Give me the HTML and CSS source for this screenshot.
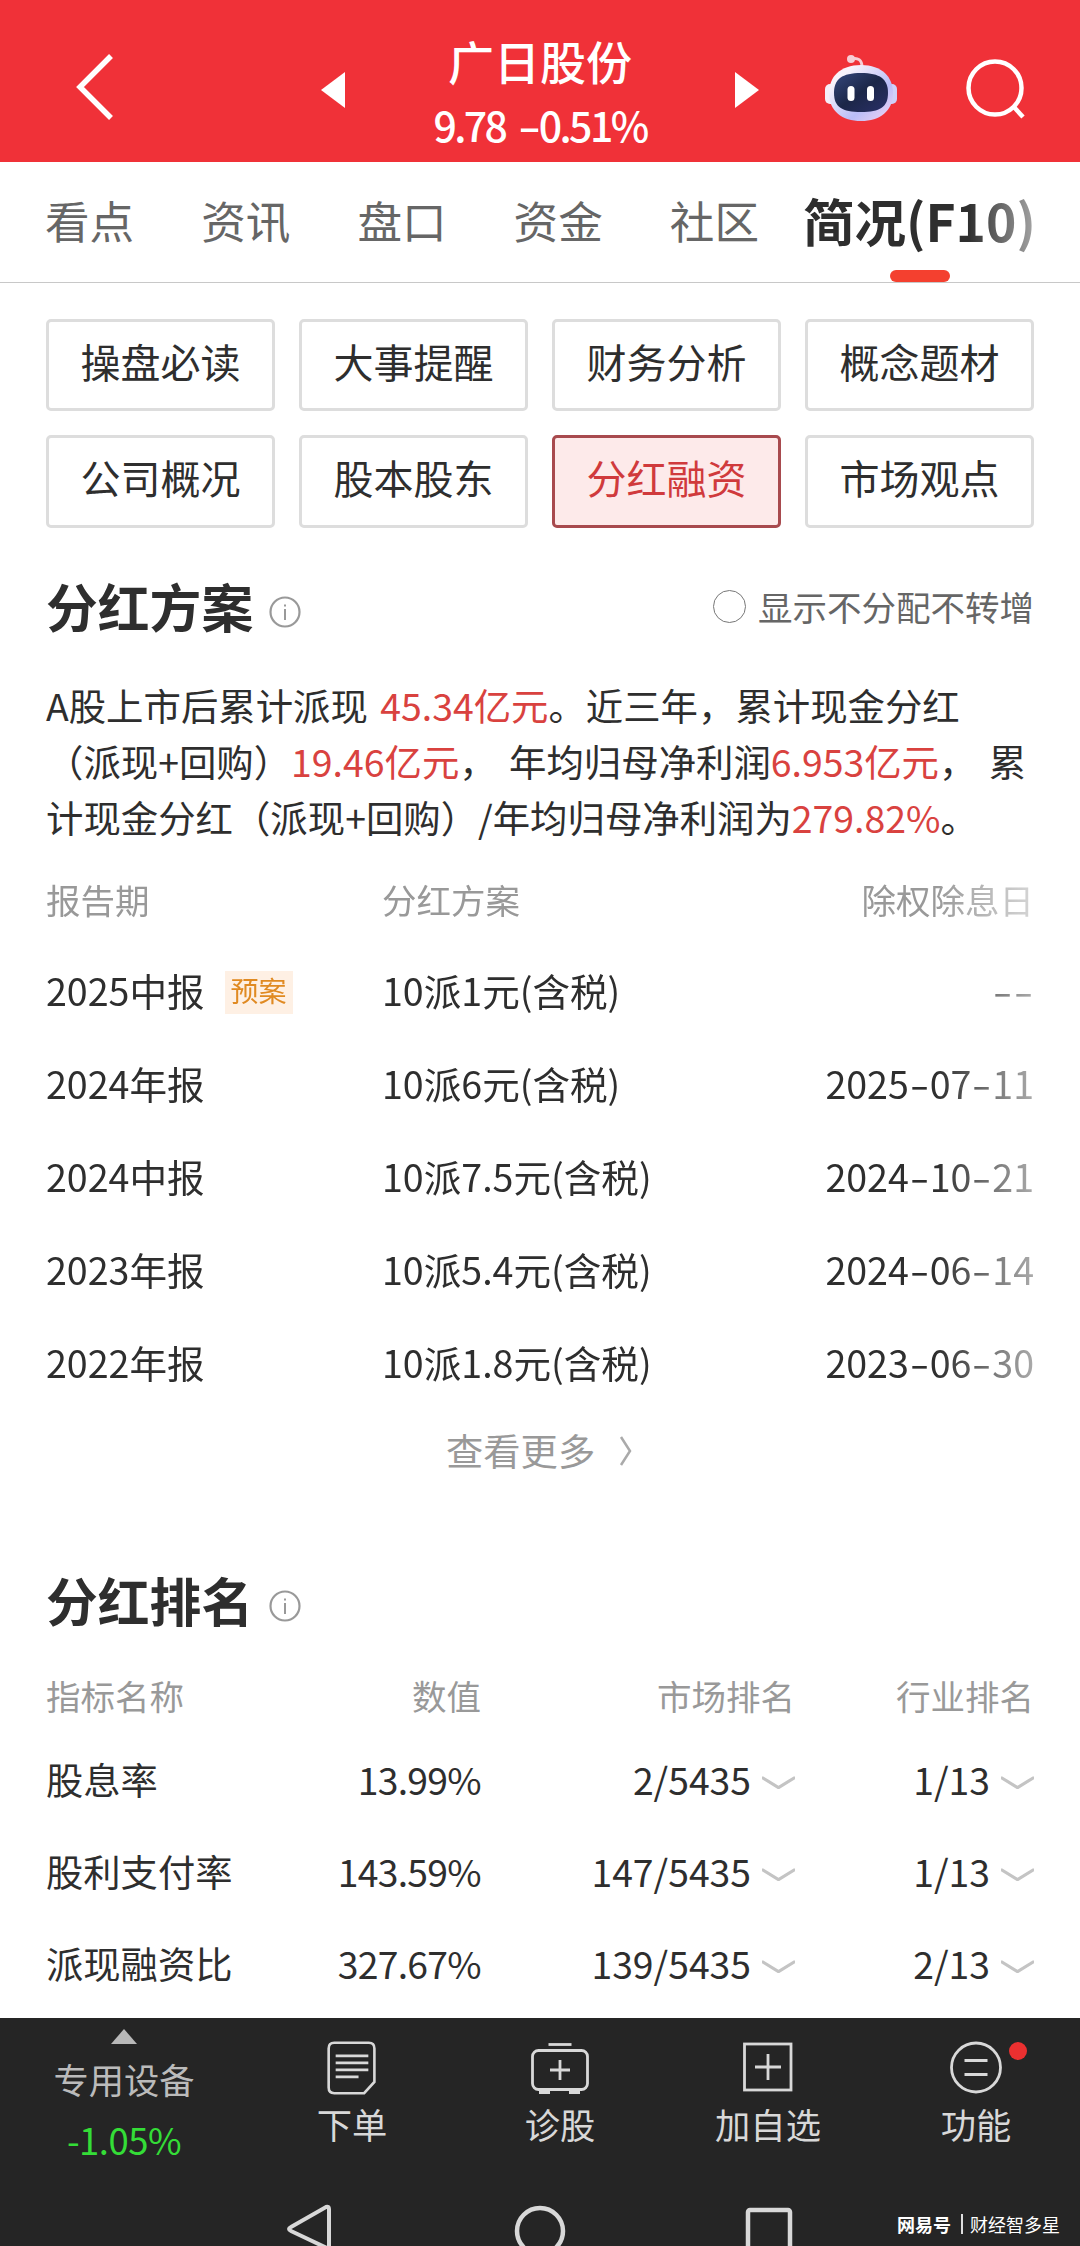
FILE: index.html
```html
<!DOCTYPE html>
<html lang="zh-CN">
	<head>
		<meta charset="utf-8">
		<title>广日股份</title>
		<link rel="stylesheet" href="styles.css">
	</head>
	<body>
		<div class="header">
			<svg class="back" width="40" height="70" viewBox="0 0 40 70"><path d="M37 4L6 35L37 66" fill="none" stroke="#fff" stroke-width="5.5"/></svg>
			<svg class="prev" width="24" height="36" viewBox="0 0 24 36"><path d="M24 0V36L0 18Z" fill="#fff"/></svg>
			<div class="stock">
				<div class="name">广日股份</div>
				<div class="price">9.78 <span class="dash">-</span>0.51%</div>
			</div>
			<svg class="next" width="24" height="36" viewBox="0 0 24 36"><path d="M0 0V36L24 18Z" fill="#fff"/></svg>
			<svg class="robot" width="74" height="70" viewBox="0 0 74 70">
				<defs>
					<linearGradient id="shell" x1="0" y1="0" x2="1" y2="1">
						<stop offset="0.2" stop-color="#f8f3fb"/>
						<stop offset="0.65" stop-color="#b9bdf8"/>
						<stop offset="1" stop-color="#f6d5f3"/>
					</linearGradient>
					<linearGradient id="face" x1="0" y1="0" x2="1" y2="1">
						<stop offset="0" stop-color="#35477c"/>
						<stop offset="0.5" stop-color="#1c2748"/>
						<stop offset="1" stop-color="#2a2f68"/>
					</linearGradient>
				</defs>
				<path d="M27 6C34 4 38 7 38 14" fill="none" stroke="#f7cdd5" stroke-width="3"/>
				<circle cx="27" cy="6" r="4" fill="#f7cdd5"/>
				<rect x="1" y="31" width="12" height="20" rx="5" fill="#f5eef8"/>
				<rect x="61" y="31" width="12" height="20" rx="5" fill="#cfd0f8"/>
				<path d="M37 12C58 12 69 24 69 40C69 58 56 68 37 68C18 68 5 58 5 40C5 24 16 12 37 12Z" fill="url(#shell)"/>
				<path d="M37 20C56 20 64 26 64 40C64 54 56 59 37 59C18 59 10 54 10 40C10 26 18 20 37 20Z" fill="url(#face)"/>
				<rect x="23.500" y="33" width="7" height="15" rx="3.500" fill="#fff"/>
				<rect x="43" y="33" width="7" height="15" rx="3.500" fill="#fff"/>
			</svg>
			<svg class="search" width="62" height="62" viewBox="0 0 62 62"><g fill="none" stroke="#fff" stroke-width="4.500"><circle cx="30" cy="30" r="26.500"/><path d="M48 48L58 59"/></g></svg>
		</div>

		<div class="tabs">
			<span class="tab">看点</span>
			<span class="tab">资讯</span>
			<span class="tab">盘口</span>
			<span class="tab">资金</span>
			<span class="tab">社区</span>
			<span class="tab active"><span class="fade">简况(F10)</span></span>
		</div>

		<div class="content">
			<div class="menu">
				<span class="btn">操盘必读</span>
				<span class="btn">大事提醒</span>
				<span class="btn">财务分析</span>
				<span class="btn">概念题材</span>
				<span class="btn">公司概况</span>
				<span class="btn">股本股东</span>
				<span class="btn on">分红融资</span>
				<span class="btn">市场观点</span>
			</div>

			<div class="title">
				<h2>分红方案</h2>
				<svg class="info" width="32" height="32" viewBox="0 0 32 32"><circle cx="16" cy="16" r="14.500" fill="none" stroke="#999" stroke-width="2.200"/><path d="M16 13V24M16 8.500V10.500" stroke="#999" stroke-width="2"/></svg>
				<span class="radio"></span>
				<span class="option">显示不分配不转增</span>
			</div>
			<p class="summary">A股上市后累计派现 <b>45.34亿元</b>。近三年，累计现金分红<br>（派现+回购）<b>19.46亿元</b>， 年均归母净利润<b>6.953亿元</b>， 累<br>计现金分红（派现+回购）/年均归母净利润为<b>279.82%</b>。</p>

			<div class="plan fade-table">
				<div class="row head"><span>报告期</span><span>分红方案</span><span>除权除息日</span></div>
				<div class="row"><span>2025中报<i class="tag">预案</i></span><span>10派1元(含税)</span><span><u class="dash">-</u><u class="dash">-</u></span></div>
				<div class="row"><span>2024年报</span><span>10派6元(含税)</span><span>2025<u class="dash">-</u>07<u class="dash">-</u>11</span></div>
				<div class="row"><span>2024中报</span><span>10派7.5元(含税)</span><span>2024<u class="dash">-</u>10<u class="dash">-</u>21</span></div>
				<div class="row"><span>2023年报</span><span>10派5.4元(含税)</span><span>2024<u class="dash">-</u>06<u class="dash">-</u>14</span></div>
				<div class="row"><span>2022年报</span><span>10派1.8元(含税)</span><span>2023<u class="dash">-</u>06<u class="dash">-</u>30</span></div>
			</div>
			<div class="more">查看更多<svg width="14" height="34" viewBox="0 0 14 34"><path d="M2 3L11 17L2 31" fill="none" stroke="#aaa" stroke-width="2.500"/></svg></div>

			<div class="title second">
				<h2>分红排名</h2>
				<svg class="info" width="32" height="32" viewBox="0 0 32 32"><circle cx="16" cy="16" r="14.500" fill="none" stroke="#999" stroke-width="2.200"/><path d="M16 13V24M16 8.500V10.500" stroke="#999" stroke-width="2"/></svg>
			</div>
			<div class="rank">
				<div class="row head"><span>指标名称</span><span>数值</span><span>市场排名</span><span>行业排名</span></div>
				<div class="row"><span>股息率</span><span class="num">13.99%</span><span class="drop">2/5435</span><span class="drop">1/13</span></div>
				<div class="row"><span>股利支付率</span><span class="num">143.59%</span><span class="drop">147/5435</span><span class="drop">1/13</span></div>
				<div class="row"><span>派现融资比</span><span class="num">327.67%</span><span class="drop">139/5435</span><span class="drop">2/13</span></div>
			</div>
		</div>

		<div class="footer">
			<div class="bar">
				<div class="sector">
					<svg width="26" height="15" viewBox="0 0 26 15"><path d="M13 0L26 15H0Z" fill="#b8b8b8"/></svg>
					<span class="sname">专用设备</span>
					<span class="down">-1.05%</span>
				</div>
				<div class="item">
					<svg width="60" height="60" viewBox="0 0 60 60"><g fill="none" stroke="#d8d8d8" stroke-width="2.800"><path d="M11 3H48Q54 3 54 9V45L43 57H11Q5 57 5 51V9Q5 3 11 3Z"/><path d="M12.500 17H47.500M12.500 24.500H47.500M12.500 32H47.500M12.500 39.500H37"/></g></svg>
					<span>下单</span>
				</div>
				<div class="item">
					<svg width="60" height="60" viewBox="0 0 60 60"><g fill="none" stroke="#d8d8d8" stroke-width="2.800"><rect x="2.500" y="12.500" width="55" height="39" rx="6"/><path d="M18.500 6.500H41.500"/><path d="M30 22V42M20 32H40"/><path d="M9 54H20M39 54H50" stroke-width="4"/></g></svg>
					<span>诊股</span>
				</div>
				<div class="item">
					<svg width="60" height="60" viewBox="0 0 60 60"><g fill="none" stroke="#d8d8d8" stroke-width="2.800"><rect x="6.500" y="6" width="46.500" height="46"/><path d="M30 16V42M17 29H43"/></g></svg>
					<span>加自选</span>
				</div>
				<div class="item">
					<svg width="60" height="60" viewBox="0 0 60 60"><g fill="none" stroke="#d8d8d8" stroke-width="2.800"><circle cx="30" cy="29.500" r="24.500"/><path d="M18.500 22.500H41.500M18.500 36.500H41.500"/></g></svg>
					<span>功能</span>
					<em class="dot"></em>
				</div>
			</div>
			<div class="nav">
				<svg class="n1" width="50" height="42" viewBox="0 0 50 42"><path d="M6 23L41 3Q44 2 44 5V45L6 27Q2 25 6 23Z" fill="none" stroke="#d8d8d8" stroke-width="4"/></svg>
				<svg class="n2" width="52" height="42" viewBox="0 0 52 42"><circle cx="26" cy="27" r="23" fill="none" stroke="#d8d8d8" stroke-width="4.500"/></svg>
				<svg class="n3" width="48" height="42" viewBox="0 0 48 42"><rect x="3" y="6" width="42" height="50" rx="2" fill="none" stroke="#d8d8d8" stroke-width="4.500"/></svg>
				<div class="mark"><strong>网易号</strong><span>财经智多星</span></div>
			</div>
		</div>
	</body>
</html>
```
FILE: styles.css
```css
body, html {
	margin:0;
	padding:0;
}
body {
	width:1080px;
	height:2246px;
	overflow:hidden;
	background:#fff;
	color:#2e2e2e;
	font-family:"Noto Sans CJK SC",sans-serif;
	font-size:37.3px;
}
svg {
	display:block;
	flex:none;
}
.dash {
	display:inline-block;
	width:0.555em;
	text-align:center;
	text-decoration:none;
	transform:scaleX(1.5);
}

/* header */
.header {
	display:flex;
	height:162px;
	background:#f03138;
	color:#fff;
}
.back {
	margin:52px 0 0 74px;
}
.prev {
	margin:72px 0 0 207px;
}
.stock {
	width:390px;
	text-align:center;
	font-weight:500;
	white-space:nowrap;
}
.name {
	margin-top:30px;
	font-size:46px;
	line-height:60px;
}
.price {
	margin-top:6px;
	font-size:41px;
	line-height:56px;
	letter-spacing:-2.6px;
	word-spacing:4px;
}
.price .dash {
	transform:scaleX(1.6);
}
.next {
	margin-top:72px;
}
.robot {
	margin:53px 0 0 65px;
}
.search {
	margin:58px 0 0 67px;
}

/* tabs */
.tabs {
	display:flex;
	gap:67px;
	box-sizing:border-box;
	height:121px;
	padding:0 0 5px 45px;
	border-bottom:1px solid #c8c8c8;
	align-items:center;
	font-size:44.6px;
	color:#666;
	white-space:nowrap;
}
.active {
	position:relative;
	margin-left:-23px;
	font-size:51.5px;
	font-weight:bold;
	color:#2e2e2e;
}
.active:after {
	content:"";
	position:absolute;
	left:87px;
	bottom:-25px;
	width:60px;
	height:12px;
	border-radius:6px;
	background:#f4402f;
}
.fade {
	-webkit-mask-image:linear-gradient(to right,#000 165px,rgba(0,0,0,0.45) 230px);
	mask-image:linear-gradient(to right,#000 165px,rgba(0,0,0,0.45) 230px);
}

.content {
	padding:36px 46px 9px;
}
.menu {
	display:grid;
	grid-template-columns:repeat(4,1fr);
	grid-template-rows:92px 93px;
	gap:24px;
}
.btn {
	display:flex;
	box-sizing:border-box;
	padding-bottom:9px;
	border:3px solid #ddd;
	border-radius:5px;
	align-items:center;
	justify-content:center;
	font-size:40px;
}
.on {
	border-color:#a84a4e;
	background:#fdeaea;
	color:#d03a3c;
}

.title {
	display:flex;
	height:74px;
	margin-top:40px;
	align-items:center;
}
.title h2 {
	margin:2px 0 0;
	font-size:51.8px;
	line-height:74px;
	font-weight:bold;
}
.info {
	margin:14px 0 0 16px;
}
.radio {
	box-sizing:border-box;
	width:33px;
	height:33px;
	margin:2px 12px 0 auto;
	border:1.5px solid #777;
	border-radius:50%;
}
.option {
	margin-top:2px;
	font-size:34.5px;
	color:#666;
}
.summary {
	margin:36px 0 0;
	font-size:37.4px;
	line-height:55.8px;
	word-spacing:4px;
	white-space:nowrap;
}
.summary b {
	font-weight:normal;
	color:#d9423f;
}

/* tables */
.row {
	display:grid;
	height:93px;
	align-items:center;
	white-space:nowrap;
}
.head {
	font-size:34.5px;
	color:#999;
}
.plan {
	margin-top:11px;
	font-size:37.6px;
}
.plan .row {
	grid-template-columns:336px 1fr 300px;
}
.plan .head {
	height:86px;
	margin-bottom:1px;
}
.plan span:last-child {
	text-align:right;
}
.fade-table {
	-webkit-mask-image:linear-gradient(to right,#000 890px,rgba(0,0,0,0.4) 988px);
	mask-image:linear-gradient(to right,#000 890px,rgba(0,0,0,0.4) 988px);
}
.tag {
	display:inline-block;
	width:68px;
	height:43px;
	margin-left:20px;
	background:#fef0e4;
	color:#e08a22;
	font-size:28px;
	line-height:39px;
	font-style:normal;
	text-align:center;
	vertical-align:4px;
}
.more {
	display:flex;
	height:83px;
	padding-left:400px;
	align-items:center;
	color:#999;
}
.more svg {
	margin:2px 0 0 24px;
}
.second {
	margin-top:71px;
}
.rank {
	margin-top:21px;
}
.rank .row {
	grid-template-columns:250px 185px 314px 239px;
	height:92px;
}
.rank .head {
	height:76px;
}
.rank span + span {
	text-align:right;
}
.num {
	letter-spacing:-0.7px;
}
.drop:after {
	content:"";
	display:inline-block;
	width:33px;
	height:13px;
	margin-left:11px;
	vertical-align:6px;
	background:#c4c4c4;
	clip-path:polygon(0 0,4% 0,50% 72%,96% 0,100% 0,100% 22%,50% 100%,0 22%);
}

/* bottom */
.footer {
	height:228px;
	background:#252525;
	color:#d8d8d8;
	font-size:35.3px;
}
.bar {
	display:grid;
	grid-template-columns:248px repeat(4,208px);
	height:180px;
}
.sector, .item {
	position:relative;
	display:flex;
	flex-direction:column;
	align-items:center;
}
.sector svg {
	margin-top:11px;
}
.sname {
	margin-top:8px;
	line-height:54px;
	color:#bbb;
}
.down {
	margin-top:7px;
	color:#34dd37;
	font-size:36.5px;
	line-height:54px;
	letter-spacing:-0.5px;
}
.item svg {
	margin-top:20px;
}
.item span {
	line-height:52px;
}
.item:nth-child(2) svg {
	width:56px;
}
.dot {
	position:absolute;
	left:137px;
	top:24px;
	width:18px;
	height:18px;
	border-radius:50%;
	background:#eb3030;
}
.nav {
	display:flex;
	height:48px;
	padding:6px 0 0 285px;
	box-sizing:border-box;
	overflow:hidden;
}
.n2 {
	margin-left:179px;
}
.n3 {
	margin-left:179px;
}
.mark {
	display:flex;
	height:20px;
	margin:10px 0 0 104px;
	color:#fff;
	font-size:18px;
	line-height:20px;
	white-space:nowrap;
}
.mark span {
	margin-left:10px;
	padding-left:7px;
	border-left:2px solid #ddd;
}
```
